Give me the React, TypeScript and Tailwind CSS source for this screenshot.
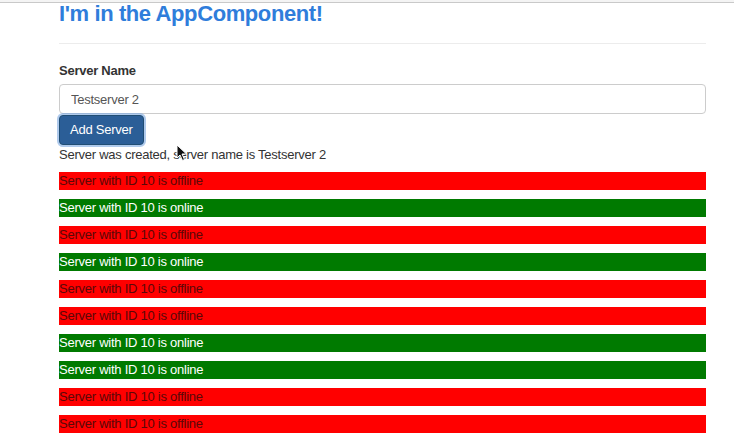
import React from 'react';

const servers = [
  false, true, false, true, false, false, true, true, false, false,
];

function Cursor() {
  return (
    <svg
      className="absolute left-[176px] top-[144px]"
      width="12"
      height="18"
      viewBox="0 0 12 18"
    >
      <path
        d="M1 1 L1 14 L4 11 L6.5 16.5 L8.5 15.5 L6 10 L10.5 10 Z"
        fill="#111"
        stroke="#fff"
        strokeWidth="1"
        strokeLinejoin="round"
      />
    </svg>
  );
}

export default function App() {
  return (
    <div
      className="relative w-[734px] h-[436px] overflow-hidden bg-white text-[#333] text-[13px] tracking-[-0.25px]"
      style={{ fontFamily: '"Liberation Sans", Arial, Helvetica, sans-serif' }}
    >
      <div className="h-[2px] bg-[#f4f4f4]" />
      <div className="h-px bg-[#c9c9c9]" />

      <div className="ml-[59px] w-[647px]">
        <h1 className="text-[22px] leading-[22px] font-bold text-[#2f7ddb] tracking-[-0.4px]">
          I'm in the AppComponent!
        </h1>
        <hr className="mt-[18px] border-0 h-px bg-[#ececec]" />

        <label className="block mt-[18px] font-bold leading-[18px]">Server Name</label>
        <input
          readOnly
          value="Testserver 2"
          className="mt-[4px] block w-full h-[30px] px-[11px] border border-[#cccccc] rounded-[4px] text-[13px] text-[#555] outline-none tracking-[-0.25px]"
        />
        <button className="block mt-px h-[30px] px-[10px] bg-[#2b5e97] border border-[#204d74] rounded-[4px] text-white text-[13px] leading-[18px] tracking-[-0.25px] ring-2 ring-[#7aa7e0]/60">
          Add Server
        </button>
        <p className="leading-[17px] mt-px">Server was created, server name is Testserver 2</p>

        <div className="mt-[9px] flex flex-col gap-[9px]">
          {servers.map((online, i) =>
            online ? (
              <p key={i} className="h-[18px] leading-[18px] bg-[#007a00] text-white">
                Server with ID 10 is online
              </p>
            ) : (
              <p key={i} className="h-[18px] leading-[18px] bg-[#ff0000] text-[#5a0808]">
                Server with ID 10 is offline
              </p>
            )
          )}
        </div>
      </div>

      <Cursor />
    </div>
  );
}
